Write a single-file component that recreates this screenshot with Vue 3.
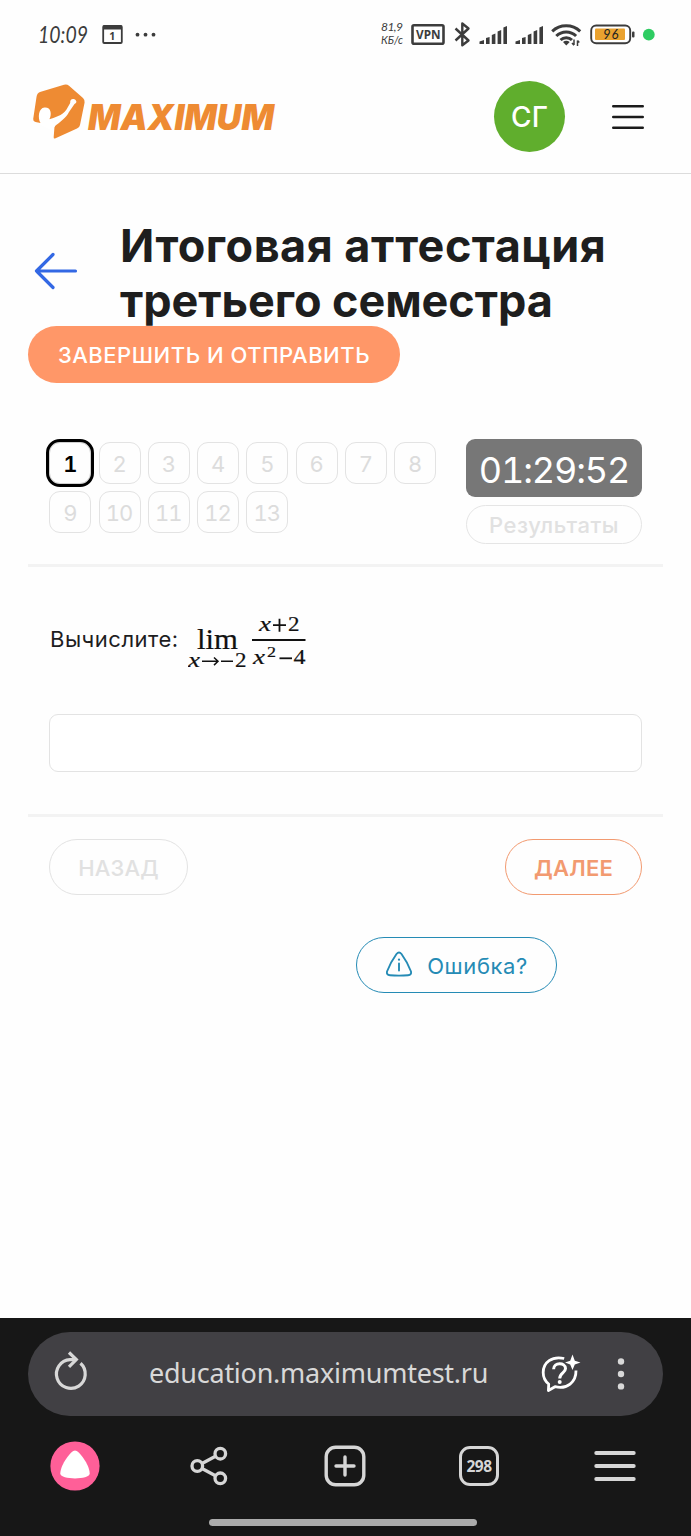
<script setup>
const questions = Array.from({ length: 13 }, (_, i) => i + 1)
const current = 1
</script>

<template>
  <div class="screen">
    <div class="status">
      <svg width="691" height="70" viewBox="0 0 691 70">
        <g fill="#3c3c3c" class="hand">
          <text x="38" y="42.500" font-size="22.500" textLength="50" lengthAdjust="spacingAndGlyphs">10:09</text>
          <text x="381" y="31" font-size="12" textLength="22">81,9</text>
          <text x="381" y="44" font-size="11.5" textLength="22" lengthAdjust="spacingAndGlyphs">КБ/с</text>
        </g>
        <rect x="103.2" y="26" width="18.6" height="17" rx="1" fill="none" stroke="#3c3c3c" stroke-width="1.8" />
        <path d="M103 25.500h19v4h-19z" fill="#3c3c3c" />
        <text x="112.3" y="40" font-size="10.5" font-weight="700" text-anchor="middle" class="sans" fill="#3c3c3c">1</text>
        <g fill="#3c3c3c"><circle cx="137.5" cy="34.7" r="1.9" /><circle cx="145.5" cy="34.7" r="1.9" /><circle cx="153.5" cy="34.7" r="1.9" /></g>
        <rect x="412.5" y="25.2" width="31" height="18.6" rx="1.5" fill="none" stroke="#3c3c3c" stroke-width="2.6" />
        <text x="416" y="39" font-size="12.5" font-weight="700" class="sans" fill="#3c3c3c" textLength="24.5" lengthAdjust="spacingAndGlyphs">VPN</text>
        <path d="M455.5 28.5 468.5 40.5 462.3 45.3V23.5L468.5 28.5 455.5 40.5" fill="none" stroke="#3c3c3c" stroke-width="2.4" stroke-linejoin="round" />
        <path fill="#3c3c3c" d="M479.500 44v-2.500l4.500-1.500v4zM486 44v-6l3.600-1v7zM491.800 44v-9l3.600-1.500V44zM497.600 44V31.500l3.600-1.500v14zM503.400 44V27.500L507 26v18z" />
        <path fill="#3c3c3c" d="M515.500 44v-2.500l4.500-1.500v4zM522 44v-6l3.600-1v7zM527.800 44v-9l3.600-1.500V44zM533.600 44V31.500l3.600-1.500v14zM539.400 44V27.500L543 26v18z" />
        <g fill="none" stroke="#3c3c3c" stroke-width="3">
          <path d="M552.2 31.4a20.5 20.5 0 0 1 28 0M556.3 36a14 14 0 0 1 19.8 0M560.5 40a8.2 8.2 0 0 1 11.5 0" />
          <path d="m563 42 3.3 3.6 3.4-3.6q-3.4-2.4-6.7 0z" fill="#3c3c3c" stroke="none" />
          <path d="M574 39.5V45m-2-2 2 2.2M577.5 46v-5.5m0 0 1.8 2" stroke-width="1.5" />
        </g>
        <rect x="591.2" y="25.5" width="39" height="17.8" rx="5" fill="#fff" stroke="#3c3c3c" stroke-width="1.9" />
        <rect x="595" y="28.5" width="30" height="11.6" rx="1" fill="#eaa22f" />
        <rect x="632" y="31.5" width="2.5" height="6" rx="1" fill="#3c3c3c" />
        <text x="603" y="39.3" font-size="13" class="hand" fill="#222" textLength="15.5">96</text>
        <circle cx="648.8" cy="34.7" r="5.9" fill="#2ecc62" />
      </svg>
    </div>

    <header class="header">
      <svg class="logo" width="250" height="60" viewBox="0 0 250 60">
        <path fill="#ee8b33" d="M9 10 33 2.8Q36 2 38 3.8L52 16Q54 18 53.6 20.5L49 43Q48.600 45.500 46 46.400L24 56.500Q22.500 57 22.700 55L23.500 44.500C29 40 35 36 38 30L43.500 22C46 21.300 46 18.500 43.500 17.300 40.500 16.400 39 18 39.200 21L35.500 27.500C31 34 24 35 17.500 37.800 15 39 14.500 40 14 41Q12 38.500 9.500 41L4.500 40Q2 39.300 2.200 37L5.500 15Q6 11 9 10Z" />
        <path fill="#fff" d="M9.500 41C6.500 36 7.500 26 13.500 25.500 20 25 21 32 18.500 37L24 44.500 20 48 9.500 43Z" />
        <text x="57" y="48" font-size="36" class="wordmark" textLength="186" lengthAdjust="spacingAndGlyphs" fill="#ee8b33">MAXIMUM</text>
      </svg>
      <div class="avatar">СГ</div>
      <svg class="burger" width="32" height="26" viewBox="0 0 32 26"><path d="M1.200 2.200h29.600M1.200 13h29.600M1.200 23.800h29.600" stroke="#1b1b1b" stroke-width="2.400" stroke-linecap="round" /></svg>
    </header>

    <main class="main">
      <div class="heading">
        <svg class="back" width="44" height="38" viewBox="0 0 44 38"><path d="M19 2.500 2.500 19 19 35.500M2.500 19H41.500" fill="none" stroke="#3368e4" stroke-width="3.200" stroke-linecap="round" stroke-linejoin="round" /></svg>
        <h1><span class="t1">Итоговая аттестация</span><br /><span class="t2">третьего семестра</span></h1>
      </div>
      <button class="finish"><span>ЗАВЕРШИТЬ И ОТПРАВИТЬ</span></button>

      <section class="top">
        <div class="grid">
          <div v-for="q in questions" :key="q" class="cell" :class="{ active: q === current }">{{ q }}</div>
        </div>
        <div class="side">
          <div class="timer">01:29:52</div>
          <div class="results">Результаты</div>
        </div>
      </section>
      <div class="rule"></div>

      <section class="task">
        <div class="question">
          <span>Вычислите:</span>
          <svg width="120" height="60" viewBox="0 0 120 60" class="formula">
            <text x="9" y="38" font-size="28.500" textLength="41" lengthAdjust="spacingAndGlyphs">lim</text>
            <text x="0" y="56" font-size="21" class="it" textLength="12" lengthAdjust="spacingAndGlyphs">x</text>
            <path d="M14 50.300H30M26 46.500 30 50.300 26 54.100M33 50.300H45" fill="none" stroke="#111" stroke-width="1.500" />
            <text x="47" y="56" font-size="20" textLength="11.500" lengthAdjust="spacingAndGlyphs">2</text>
            <text x="71" y="20" font-size="21" class="it" textLength="12" lengthAdjust="spacingAndGlyphs">x</text>
            <path d="M85 14.200H98M91.500 7.700V20.700" stroke="#111" stroke-width="1.800" />
            <text x="100" y="20" font-size="20" textLength="11.500" lengthAdjust="spacingAndGlyphs">2</text>
            <path d="M64 29H117.500" stroke="#111" stroke-width="2" />
            <text x="65" y="53" font-size="21" class="it" textLength="12" lengthAdjust="spacingAndGlyphs">x</text>
            <text x="79" y="45.500" font-size="14.500" textLength="9" lengthAdjust="spacingAndGlyphs">2</text>
            <path d="M91.500 47.300H104" stroke="#111" stroke-width="1.800" />
            <text x="105.500" y="53" font-size="20" textLength="12" lengthAdjust="spacingAndGlyphs">4</text>
          </svg>
        </div>
        <input class="answer" type="text" />
      </section>
      <div class="rule"></div>

      <div class="nav">
        <button class="pill prev"><span>НАЗАД</span></button>
        <button class="pill next"><span>ДАЛЕЕ</span></button>
      </div>
      <button class="pill error">
        <svg width="28" height="26" viewBox="0 0 28 26" fill="none" stroke="#258bb5" stroke-width="1.900" stroke-linecap="round" stroke-linejoin="round">
          <path d="M11.500 3Q14 0 16.500 3 22 10.500 26 20.500 26.800 23.800 23 24.200 14 25 5 24.200 1.200 23.800 2 20.500 6 10.500 11.500 3Z" />
          <path d="M14 12.500V19.500" /><path d="M14 8.500v.2" stroke-width="2.200" />
        </svg>
        <span>Ошибка?</span>
      </button>
    </main>

    <footer class="browser">
      <div class="url">
        <svg class="reload" width="36" height="42" viewBox="0 0 36 42" fill="none" stroke="#d8d8d8" stroke-width="3.200"><path d="M28.500 12.300A14.400 14.400 0 1 1 18 8.600H23" /><path d="M17 1.500 24.300 8.600 17 15.800" /></svg>
        <span class="host">education.maximumtest.ru</span>
        <svg class="ai" width="42" height="42" viewBox="0 0 42 42" fill="none" stroke="#fff" stroke-width="2.800">
          <path d="M25.200 5.500C13 2.600 4.200 9.500 4.200 19.500 4.200 24.500 6.500 28.500 9.700 31L9.400 37.500 16 33.700C28 36.800 37.200 29 37 17.500" stroke-linejoin="round" />
          <path d="M14.600 16.200C14.600 9 26.500 9 26.500 15.500 26.500 20 20.700 20 20.700 25.500" stroke-width="3" />
          <circle cx="20.700" cy="29" r="2" fill="#fff" stroke="none" />
          <path d="M33.500 1.500 35.800 7.800 41.500 9.500 35.800 11.600 33.500 17 31.200 11.600 26 9.500 31.200 7.800Z" fill="#fff" stroke="none" />
        </svg>
        <svg class="dots" width="8" height="34" viewBox="0 0 8 34" fill="#d8d8d8"><circle cx="4" cy="4.500" r="3.200" /><circle cx="4" cy="17" r="3.200" /><circle cx="4" cy="29.400" r="3.200" /></svg>
      </div>
      <div class="tools">
        <svg width="50" height="50" viewBox="0 0 50 50"><circle cx="25" cy="25" r="24.600" fill="#ff5f98" /><path d="M25 9.500C29 9.500 39.500 23.500 39.700 32.500 39.500 39 10.500 39 10.300 32.500 10.500 23.500 21 9.500 25 9.500Z" fill="#fff" /></svg>
        <svg width="50" height="42" viewBox="1 0 50 42" fill="none" stroke="#d6d6d6" stroke-width="3.300"><circle cx="13.300" cy="21" r="5.300" /><circle cx="36.300" cy="8.700" r="5.300" /><circle cx="36.300" cy="33.300" r="5.300" /><path d="m18 18.500 13.500-7.300M18 23.500l13.500 7.300" /></svg>
        <svg width="50" height="42" viewBox="-5 -1 50 42" fill="none" stroke="#d6d6d6" stroke-width="3.400"><rect x="1.200" y="1.200" width="37.600" height="37.600" rx="9.500" /><path d="M20 11v18M11 20h18" stroke-linecap="round" /></svg>
        <div class="tabslot"><div class="tabs">298</div></div>
        <svg width="50" height="32" viewBox="-4 0 50 32"><path d="M2.200 3h37.600M2.200 16h37.600M2.200 29h37.600" stroke="#d6d6d6" stroke-width="3.800" stroke-linecap="round" /></svg>
      </div>
      <div class="homebar"></div>
    </footer>
  </div>
</template>

<style>
body { margin: 0; background: #fff; }
</style>

<style scoped>
.screen { width: 691px; height: 1536px; display: flex; flex-direction: column; overflow: hidden; background: #fefefe; font-family: Inter, sans-serif; color: #1d1d1f; }
button { font: inherit; box-sizing: border-box; padding: 0; white-space: nowrap; }
svg { display: block; flex: none; }
.status { height: 70px; }
.hand { font-family: Lato, sans-serif; font-style: italic; }
.sans { font-family: "Noto Sans", sans-serif; }
.header { height: 104px; box-sizing: border-box; border-bottom: 1px solid #dcdcdc; display: flex; align-items: center; padding: 0 47px 10px 31px; }
.wordmark { font-family: Inter, sans-serif; font-weight: 900; font-style: italic; }
.logo { margin-top: -9px; }
.avatar { width: 71px; height: 71px; margin-left: 213px; border-radius: 50%; background: #60ae2d; color: #fff; font-size: 28px; font-weight: 500; display: flex; align-items: center; justify-content: center; }
.burger { margin-left: auto; }
.main { flex: 1; padding: 44px 28px 0; }
.heading { display: flex; height: 108px; }
.back { margin: 34px 0 0 6px; }
h1 { margin: 0 0 0 42px; font-size: 45px; line-height: 55px; font-weight: 700; white-space: nowrap; color: #1e1e1e; }
.t1 { letter-spacing: .48px; }
.t2 { letter-spacing: -.07px; }
.finish { display: flex; align-items: center; justify-content: center; width: 372px; height: 57px; border: 0; border-radius: 29px; background: #ff9768; color: #fff; font-size: 22px; font-weight: 500; letter-spacing: .53px; padding-top: 1px; }
.top { display: flex; justify-content: space-between; padding: 56px 21px 0 21.3px; height: 181px; box-sizing: border-box; }
.grid { display: grid; grid-template-columns: repeat(8, 42px); grid-auto-rows: 42px; gap: 7.25px; padding-top: 3px; }
.cell { box-sizing: border-box; border: 1.5px solid #e3e3e3; border-radius: 11px; display: flex; align-items: center; justify-content: center; padding: 1px 1px 0 0; font-size: 22px; letter-spacing: -1px; font-feature-settings: "tnum"; color: #dcdcdc; }
.cell.active { color: #000; font-weight: 600; outline: 3.5px solid #000; border-color: #d0d0d0; }
.side { width: 176px; display: flex; flex-direction: column; gap: 8px; }
.timer { height: 58px; border-radius: 9px; background: #777; color: #fff; font-size: 36px; letter-spacing: -1.1px; font-feature-settings: "tnum"; display: flex; align-items: center; justify-content: center; padding-top: 3px; box-sizing: border-box; }
.results { box-sizing: border-box; height: 39px; border: 1.5px solid #e5e5e5; border-radius: 20px; color: #e1e1e1; font-size: 22px; letter-spacing: .55px; font-weight: 500; display: flex; align-items: center; justify-content: center; }
.rule { height: 3px; background: #f3f3f3; }
.task { height: 247px; box-sizing: border-box; padding: 43px 21px 0; }
.question { display: flex; align-items: center; height: 60px; font-size: 22px; }
.question > span { letter-spacing: .5px; padding-left: 1px; margin-top: -2px; }
.formula { margin: 2px 0 0 9px; font-family: "Liberation Serif", serif; fill: #111; stroke: #111; stroke-width: .2px; }
.it { font-style: italic; }
.answer { display: block; box-sizing: border-box; width: 593px; height: 58px; margin-top: 44px; border: 1.5px solid #e3e3e3; border-radius: 9px; background: #fff; }
.nav { display: flex; justify-content: space-between; padding: 22px 21px 0; }
.pill { display: flex; align-items: center; justify-content: center; height: 56px; border-radius: 28px; background: transparent; font-size: 22px; font-weight: 500; padding-top: 1px; }
.prev { width: 139px; border: 1.5px solid #e3e3e3; color: #e1e1e1; letter-spacing: .2px; }
.next { width: 137px; border: 1.5px solid #f29a70; color: #f29a70; font-weight: 600; letter-spacing: .2px; }
.error { width: 201px; margin: 42px 0 0 328px; border: 1.5px solid #258bb5; color: #258bb5; gap: 14px; font-weight: 400; letter-spacing: .6px; }
.error svg { margin-top: -3px; }
.browser { height: 218px; background: #171717; box-sizing: border-box; padding: 14px 28px 0; }
.url { height: 84px; border-radius: 42px; background: #414044; display: flex; align-items: center; padding: 0 38px 0 24px; }
.reload { margin-top: -4px; }
.host { margin: -4px 0 0 61px; font-family: "Noto Sans", sans-serif; font-size: 27px; letter-spacing: -.25px; color: #d8d8d8; }
.ai { margin-left: auto; }
.dots { margin-left: 36px; }
.tools { height: 50px; margin: 25px 0 0; padding: 0 23px 0 22px; display: flex; align-items: center; justify-content: space-between; }
.tabslot { width: 50px; display: flex; justify-content: center; }
.tabs { box-sizing: border-box; width: 40px; height: 40px; margin-right: 2px; border: 3.300px solid #d6d6d6; border-radius: 11px; color: #d6d6d6; font: 700 15.500px "Noto Sans", sans-serif; letter-spacing: -.6px; display: flex; align-items: center; justify-content: center; }
.homebar { width: 268px; height: 7px; margin: 28px 0 0 181px; border-radius: 4px; background: #ababab; }
</style>
